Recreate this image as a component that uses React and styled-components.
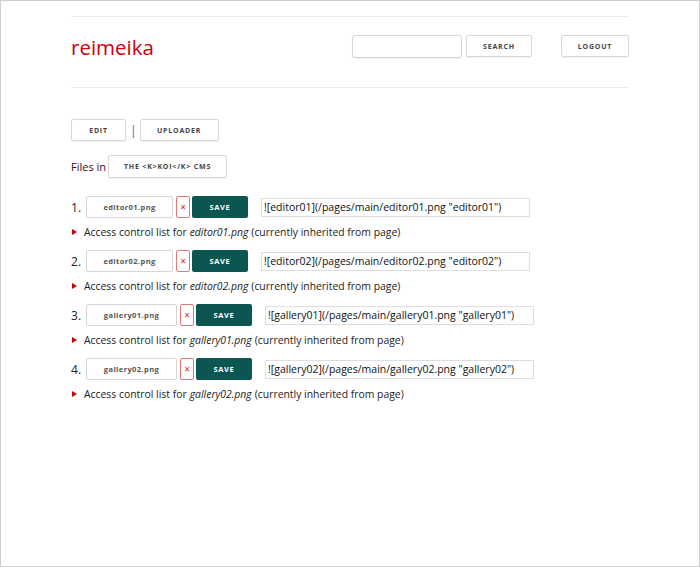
import React from 'react'
import styled, { createGlobalStyle } from 'styled-components'

const Global = createGlobalStyle`
  html, body { margin: 0; padding: 0; }
  body {
    font-family: "Open Sans", "Noto Sans", sans-serif;
    color: #222;
    background: #fff;
  }
`

const Frame = styled.div`
  box-sizing: border-box;
  width: 700px;
  height: 567px;
  border: 1px solid #cfcfcf;
  overflow: hidden;
`

const Page = styled.div`
  width: 558px;
  margin: 0 auto;
  padding-top: 15px;
`

const Rule = styled.hr`
  border: 0;
  border-top: 1px solid #ececec;
  margin: 0;
`

const Header = styled.header`
  display: flex;
  align-items: center;
  height: 58px;
  padding-bottom: 12px;
`

const Logo = styled.div`
  color: #c8000f;
  font-size: 20.5px;
  flex: 1;
  padding-top: 1px;
`

const SearchBox = styled.input`
  box-sizing: border-box;
  width: 110px;
  height: 23px;
  border: 1px solid #d6d6d6;
  border-radius: 3px;
  margin-right: 4px;
  box-shadow: 0 1px 1px rgba(0,0,0,0.05);
`

const Btn = styled.button`
  box-sizing: border-box;
  height: ${p => p.$h || 22}px;
  width: ${p => p.$w}px;
  border: 1px solid #d8d8d8;
  border-radius: 2px;
  background: #fff;
  font-family: "Open Sans", sans-serif;
  font-weight: 700;
  font-size: 7px;
  letter-spacing: 0.8px;
  color: #444;
  text-transform: uppercase;
  padding: 0;
  margin-left: ${p => p.$ml || 0}px;
  box-shadow: 0 1px 1px rgba(0,0,0,0.06);
`

const Tabs = styled.div`
  display: flex;
  align-items: center;
  margin-top: 31px;
`

const Sep = styled.span`
  color: #3a6ea5;
  font-size: 12px;
  margin: 0 3px 0 4px;
`

const FilesIn = styled.div`
  display: flex;
  align-items: center;
  margin-top: 14px;
  font-size: 11px;
  color: #3a0a26;
  gap: 2px;
`

const List = styled.div`
  margin-top: 18px;
`

const Item = styled.div`
  height: 54px;
`

const Row = styled.div`
  display: flex;
  align-items: center;
  height: 22px;
  font-size: 12px;
`

const Num = styled.span`
  width: 15px;
`

const NameBox = styled.div`
  box-sizing: border-box;
  width: ${p => p.$w}px;
  height: 22px;
  border: 1px solid #d6d6d6;
  border-radius: 2px;
  display: flex;
  align-items: center;
  justify-content: center;
  font-size: 7.5px;
  font-weight: 700;
  color: #555;
  letter-spacing: 0.4px;
`

const Remove = styled.div`
  box-sizing: border-box;
  width: 14px;
  height: 22px;
  border: 1px solid #e07a7a;
  border-radius: 2px;
  margin-left: 3px;
  color: #d22;
  font-size: 10px;
  display: flex;
  align-items: center;
  justify-content: center;
`

const Save = styled.div`
  box-sizing: border-box;
  width: 56px;
  height: 22px;
  margin-left: 2px;
  background: #0b5651;
  border-radius: 2px;
  color: #fff;
  font-size: 7.5px;
  font-weight: 700;
  letter-spacing: 0.6px;
  display: flex;
  align-items: center;
  justify-content: center;
`

const Markdown = styled.div`
  box-sizing: border-box;
  width: 269px;
  height: 19px;
  margin-left: 13px;
  border: 1px solid #dedede;
  padding-left: 2px;
  font-size: 10.5px;
  line-height: 17px;
  color: #111;
  white-space: nowrap;
`

const Acl = styled.div`
  display: flex;
  align-items: center;
  margin-top: 7px;
  font-size: 10.4px;
  color: #222;
  em { margin: 0 3px; }
`

const Tri = styled.span`
  width: 0;
  height: 0;
  border-top: 3px solid transparent;
  border-bottom: 3px solid transparent;
  border-left: 5px solid #c8000f;
  margin: 0 7px 0 1px;
`

const files = [
  { name: 'editor01', w: 87 },
  { name: 'editor02', w: 87 },
  { name: 'gallery01', w: 91 },
  { name: 'gallery02', w: 91 },
]

const App = () => (
  <Frame>
    <Global />
    <Page>
      <Rule />
      <Header>
        <Logo>reimeika</Logo>
        <SearchBox />
        <Btn $w={66} $h={22}>Search</Btn>
        <Btn $w={68} $h={22} $ml={29}>Logout</Btn>
      </Header>
      <Rule />
      <Tabs>
        <Btn $w={55}>Edit</Btn>
        <Sep>|</Sep>
        <Btn $w={79}>Uploader</Btn>
      </Tabs>
      <FilesIn>
        Files in
        <Btn $w={119} $h={23}>The &lt;K&gt;KOI&lt;/K&gt; CMS</Btn>
      </FilesIn>
      <List>
        {files.map((f, i) => (
          <Item key={f.name}>
            <Row>
              <Num>{i + 1}.</Num>
              <NameBox $w={f.w}>{f.name}.png</NameBox>
              <Remove>×</Remove>
              <Save>SAVE</Save>
              <Markdown>![{f.name}](/pages/main/{f.name}.png "{f.name}")</Markdown>
            </Row>
            <Acl>
              <Tri />
              Access control list for <em>{f.name}.png</em> (currently inherited from page)
            </Acl>
          </Item>
        ))}
      </List>
    </Page>
  </Frame>
)

export default App
